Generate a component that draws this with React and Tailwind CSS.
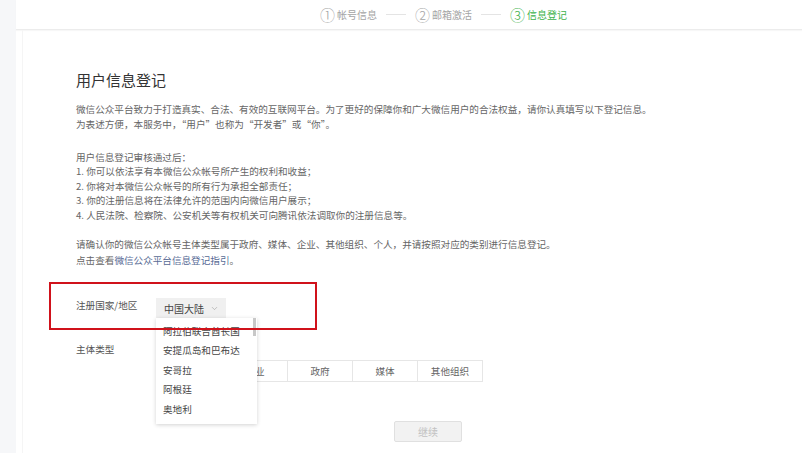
import { ChevronDown } from 'lucide-react';

const FONT = { fontFamily: '"Noto Sans CJK SC", "Noto Sans", sans-serif' };

const STEPS = [
  { no: '①', label: '帐号信息', active: false },
  { no: '②', label: '邮箱激活', active: false },
  { no: '③', label: '信息登记', active: true }
];

const COUNTRIES = ['阿拉伯联合酋长国', '安提瓜岛和巴布达', '安哥拉', '阿根廷', '奥地利', '澳大利亚'];

const TYPES = ['个人', '企业', '政府', '媒体', '其他组织'];

export default function App() {
  return (
    <div
      className="flex h-[453px] w-[802px] overflow-hidden bg-white text-[#666]"
      style={FONT}
    >
      {/* 左侧灰条 */}
      <div className="w-[16px] shrink-0 bg-[#f6f7f9]" />

      <div className="flex flex-1 flex-col">
        {/* 步骤条 */}
        <div className="flex h-[30px] shrink-0 items-center border-b border-[#ececec] pl-[304px] shadow-[0_1px_1px_rgba(0,0,0,0.03)]">
          {STEPS.map((step, i) => (
            <div key={step.no} className="flex items-center">
              {i > 0 && <div className="mx-[9px] h-px w-[20px] bg-[#e4e4e4]" />}
              <span
                className={`flex items-center gap-[2px] text-[10px] leading-none ${
                  step.active ? 'text-[#3db24b]' : 'text-[#a4a4a4]'
                }`}
              >
                <span className="text-[15px] font-light">{step.no}</span>
                {step.label}
              </span>
            </div>
          ))}
        </div>

        {/* 内容 */}
        <div className="relative flex-1 border-l border-[#f5f5f5] ml-[6px] pl-[53px]">
          <h1 className="mt-[40px] text-[15px] leading-[20px] font-normal text-[#333]">
            用户信息登记
          </h1>

          <div className="mt-[12px] text-[9.6px] leading-[15px]">
            <p>微信公众平台致力于打造真实、合法、有效的互联网平台。为了更好的保障你和广大微信用户的合法权益，请你认真填写以下登记信息。</p>
            <p>为表述方便，本服务中，“用户”也称为“开发者”或“你”。</p>
          </div>

          <div className="mt-[18px] text-[9.6px] leading-[14.4px]">
            <p>用户信息登记审核通过后：</p>
            <p>1. 你可以依法享有本微信公众帐号所产生的权利和收益；</p>
            <p>2. 你将对本微信公众帐号的所有行为承担全部责任；</p>
            <p>3. 你的注册信息将在法律允许的范围内向微信用户展示；</p>
            <p>4. 人民法院、检察院、公安机关等有权机关可向腾讯依法调取你的注册信息等。</p>
          </div>

          <div className="mt-[15px] text-[9.6px] leading-[15.5px]">
            <p>请确认你的微信公众帐号主体类型属于政府、媒体、企业、其他组织、个人，并请按照对应的类别进行信息登记。</p>
            <p>
              点击查看<span className="text-[#576b95]">微信公众平台信息登记指引</span>。
            </p>
          </div>

          {/* 注册国家/地区 */}
          <div className="mt-[30px] flex">
            <div className="w-[80px] pt-[1px] text-[9.6px] leading-[12px] text-[#555]">注册国家/地区</div>
            <div className="relative">
              <div className="flex h-[20px] w-[70px] items-center gap-[6px] bg-[#f0f0f0] pl-[8px] text-[10px] text-[#444]">
                中国大陆
                <ChevronDown className="h-[9px] w-[9px] text-[#999]" strokeWidth={1.5} />
              </div>

              {/* 下拉列表 */}
              <div className="absolute left-0 top-[20px] z-20 h-[106px] w-[101px] overflow-hidden bg-white shadow-[0_1px_4px_rgba(0,0,0,0.18)]">
                <div className="absolute right-[1px] top-0 h-[18px] w-[3px] bg-[#c8c8c8]" />
                <ul className="pl-[7px] pt-[4px] text-[9.6px] leading-[19.4px] text-[#444]">
                  {COUNTRIES.map((c) => (
                    <li key={c}>{c}</li>
                  ))}
                </ul>
              </div>
            </div>
          </div>

          {/* 主体类型 */}
          <div className="mt-[25px] flex">
            <div className="w-[80px] text-[9.6px] leading-[12px] text-[#555]">主体类型</div>
            <div className="mt-[17px] flex border border-[#e6e6e6]">
              {TYPES.map((t, i) => (
                <div
                  key={t}
                  className={`flex h-[20px] w-[65px] items-center justify-center text-[9.6px] text-[#666] ${
                    i > 0 ? 'border-l border-[#e6e6e6]' : ''
                  }`}
                >
                  {t}
                </div>
              ))}
            </div>
          </div>

          <div className="mt-[39px] pl-[318px]">
            <div className="flex h-[21px] w-[68px] items-center justify-center rounded-[2px] border border-[#e0e0e0] bg-[#f2f2f2] text-[10px] text-[#c2c2c2]">
              继续
            </div>
          </div>

          {/* 红色标注框 */}
          <div className="pointer-events-none absolute left-[26px] top-[252px] z-30 h-[48px] w-[268px] border-2 border-[#d0121b]" />
        </div>
      </div>
    </div>
  );
}
